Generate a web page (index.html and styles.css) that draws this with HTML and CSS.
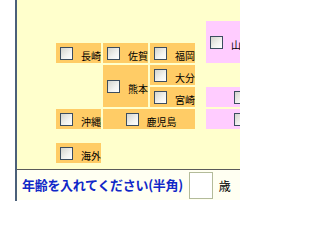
FILE: index.html
```html
<!DOCTYPE html>
<html lang="ja">
<head>
<meta charset="utf-8">
<link rel="stylesheet" href="styles.css">
</head>
<body>
<div class="page">
  <div class="map">
    <div class="grid">
      <label class="cell pink c5 r1-2"><input type="checkbox"><span>山口</span></label>
      <label class="cell orange c1 r2"><input type="checkbox"><span>長崎</span></label>
      <label class="cell orange c2 r2"><input type="checkbox"><span>佐賀</span></label>
      <label class="cell orange c3 r2"><input type="checkbox"><span>福岡</span></label>
      <label class="cell orange c2 r3-4"><input type="checkbox"><span>熊本</span></label>
      <label class="cell orange c3 r3"><input type="checkbox"><span>大分</span></label>
      <label class="cell orange c3 r4"><input type="checkbox"><span>宮崎</span></label>
      <label class="cell pink c5 r4 far"><input type="checkbox"></label>
      <label class="cell orange c1 r5"><input type="checkbox"><span>沖縄</span></label>
      <label class="cell orange c2-3 r5 center"><input type="checkbox"><span>鹿児島</span></label>
      <label class="cell pink c5 r5 far"><input type="checkbox"></label>
    </div>
    <label class="cell orange abroad"><input type="checkbox"><span>海外</span></label>
  </div>
  <div class="age">
    <span class="age-label">年齢を入れてください(半角)</span>
    <input class="age-input" type="text">
    <span class="age-unit">歳</span>
  </div>
</div>
</body>
</html>
```
FILE: styles.css
```css
html, body {
  margin: 0;
  padding: 0;
  background: #ffffff;
  overflow: hidden;
  width: 240px;
  height: 201px;
}

.page {
  margin-left: 15px;
  border-left: 2px solid #4b6079;
  height: 201px;
  font-family: "Noto Sans CJK JP", sans-serif;
}

.map {
  background: #ffffcc;
  height: 170px;
  box-sizing: border-box;
  padding: 21px 0 0 39px;
  border-bottom: 1px solid #5a5a5a;
}

.grid {
  display: grid;
  grid-template-columns: 45px 45px 45px 7px 34px;
  grid-template-rows: repeat(5, 20px);
  gap: 2px;
  width: 184px;
}

.cell {
  display: flex;
  align-items: center;
  gap: 8px;
  padding-left: 4px;
  box-sizing: border-box;
  font-size: 10px;
  line-height: 10px;
  color: #000;
  white-space: nowrap;
  overflow: hidden;
}

.cell span {
  padding-top: 6px;
}

.cell input {
  appearance: none;
  -webkit-appearance: none;
  width: 13px;
  height: 13px;
  margin: 0;
  flex: none;
  box-sizing: border-box;
  border: 1px solid #3c4d5f;
  background: linear-gradient(135deg, #d4d4cd 0%, #f3f3f0 60%, #ffffff 100%);
}

.orange { background: #ffcc66; }
.pink { background: #ffccff; }

.c1 { grid-column: 1; }
.c2 { grid-column: 2; }
.c3 { grid-column: 3; }
.c2-3 { grid-column: 2 / span 2; }
.c5 { grid-column: 5; }

.r1-2 { grid-row: 1 / span 2; }
.r2 { grid-row: 2; }
.r3 { grid-row: 3; }
.r3-4 { grid-row: 3 / span 2; }
.r4 { grid-row: 4; }
.r5 { grid-row: 5; }

.center {
  justify-content: center;
}

.far {
  padding-left: 28px;
}

.abroad {
  width: 45px;
  height: 20px;
  margin-top: 14px;
}

.age {
  display: flex;
  align-items: center;
  height: 30px;
  background: #fffff2;
  padding-left: 5px;
}

.age-label {
  color: #1028c8;
  font-weight: bold;
  font-size: 13px;
  line-height: 16px;
  letter-spacing: -0.3px;
  white-space: nowrap;
}

.age-input {
  width: 24px;
  height: 27px;
  box-sizing: border-box;
  margin: 0 0 0 6px;
  border: 1px solid #b3bb9a;
  background: #ffffff;
  padding: 0;
}

.age-unit {
  margin-left: 6px;
  font-size: 12px;
  color: #000;
}
```
